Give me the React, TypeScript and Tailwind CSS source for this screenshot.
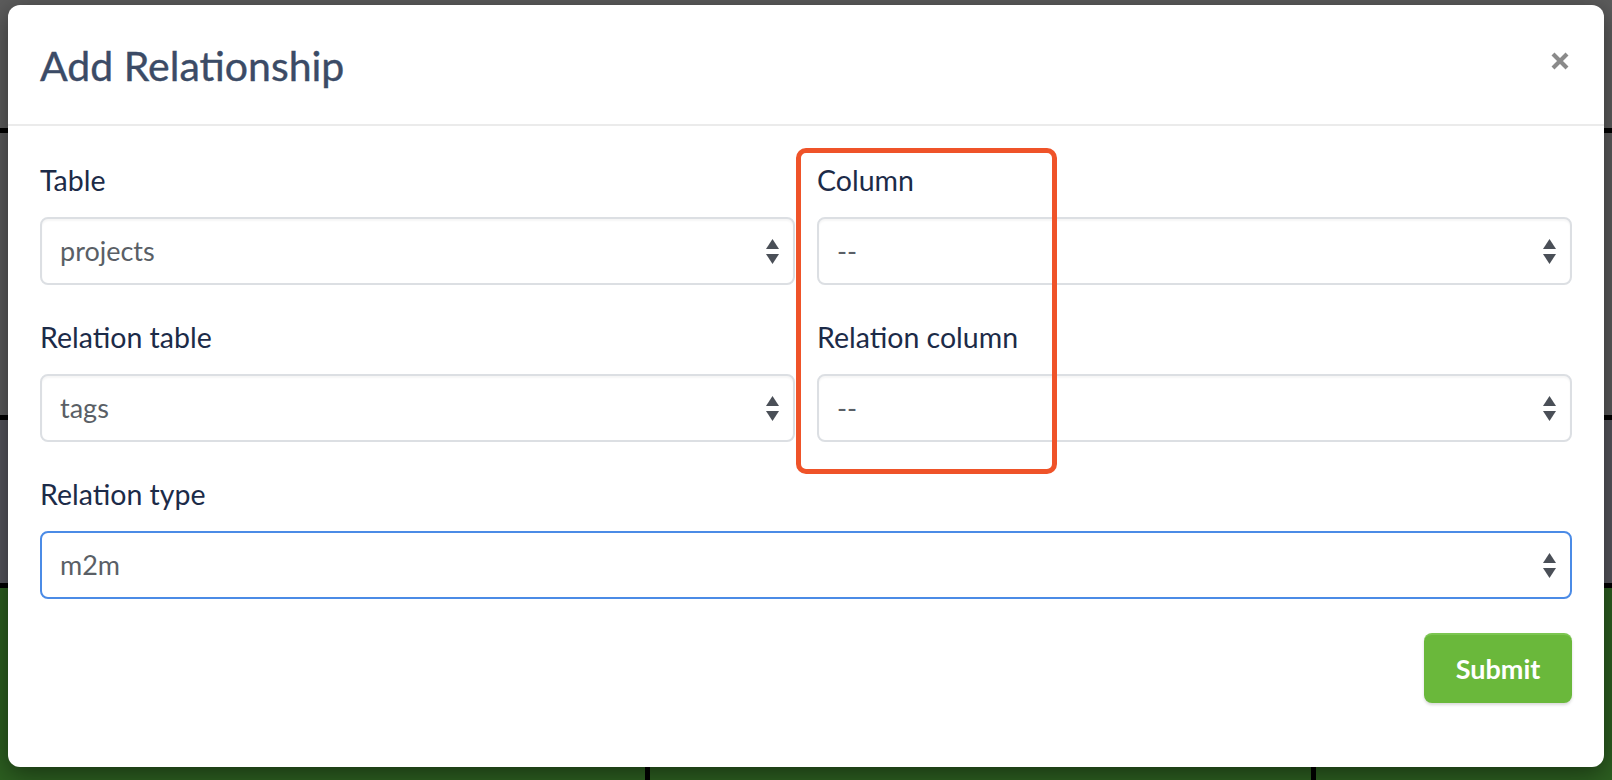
import React from 'react';

const fontStack = '[font-family:Lato,"Open_Sans",sans-serif]';

function SelectArrows() {
  return (
    <svg width="13" height="25" viewBox="0 0 13 25" className="shrink-0">
      <polygon points="0,10 6.5,0 13,10" fill="#4a4f57" />
      <polygon points="0,15 13,15 6.5,25" fill="#4a4f57" />
    </svg>
  );
}

interface FieldProps {
  label: string;
  value: string;
  focused?: boolean;
}

function Field({ label, value, focused }: FieldProps) {
  return (
    <div className="flex flex-col mb-[29px]">
      <label className="h-[45px] leading-[46px] mb-[15px] text-[28.5px] text-[#1c2b48]">{label}</label>
      <div
        className={`h-[68px] flex items-center justify-between pl-[18px] pr-[14px] rounded-[8px] bg-white border-2 ${
          focused ? 'border-[#4b8be6]' : 'border-[#dcdfe3] shadow-[inset_0_2px_2px_rgba(0,0,0,0.04)]'
        }`}
      >
        <span className="text-[27px] text-[#5a5f66]">{value}</span>
        <SelectArrows />
      </div>
    </div>
  );
}

export default function App() {
  return (
    <div className={`relative w-[1612px] h-[780px] overflow-hidden ${fontStack}`}>
      {/* dimmed page behind the modal */}
      <div className="flex flex-col h-full">
        <div className="h-[133px] bg-[#5c5c5c] border-b-[5px] border-black" />
        <div className="h-[287px] bg-[#5a5a5b] border-b-[5px] border-black" />
        <div className="h-[168px] bg-[#55555c] border-b-[5px] border-black" />
        <div className="flex-1 flex bg-[#2c5e20]">
          <div className="w-[650px] border-r-[5px] border-black" />
          <div className="w-[666px] border-r-[5px] border-black" />
          <div className="flex-1" />
        </div>
      </div>

      {/* modal */}
      <div className="absolute left-[8px] top-[5px] w-[1596px] h-[762px] bg-white rounded-[12px] shadow-[0_6px_24px_rgba(0,0,0,0.45)] flex flex-col">
        <div className="relative h-[121px] border-b-2 border-[#ebebeb] pl-[32px] pt-[40px]">
          <h2 className="text-[41px] leading-none text-[#3b4b66] font-normal [-webkit-text-stroke:0.4px_#3b4b66]">Add Relationship</h2>
          <button className="absolute right-[34px] top-[46px] w-[20px] h-[20px]">
            <svg width="20" height="20" viewBox="0 0 20 20">
              <path d="M3 3 L17 17 M17 3 L3 17" stroke="#8a8a8a" strokeWidth="4.2" strokeLinecap="butt" />
            </svg>
          </button>
        </div>

        <div className="px-[32px] pt-[31px]">
          <div className="grid grid-cols-2 gap-x-[22px]">
            <Field label="Table" value="projects" />
            <Field label="Column" value="--" />
            <Field label="Relation table" value="tags" />
            <Field label="Relation column" value="--" />
          </div>
          <Field label="Relation type" value="m2m" focused />
          <div className="flex justify-end -mt-[29px] pt-[34px]">
            <button className="w-[148px] h-[70px] rounded-[8px] bg-[#6ab83b] border-t-2 border-[#7cc651] shadow-[0_2px_3px_rgba(0,0,0,0.15)] text-white text-[27px] font-bold">
              Submit
            </button>
          </div>
        </div>
      </div>

      {/* annotation highlight */}
      <div className="absolute left-[796px] top-[148px] w-[261px] h-[326px] border-[5px] border-[#ef5329] rounded-[10px]" />
    </div>
  );
}
